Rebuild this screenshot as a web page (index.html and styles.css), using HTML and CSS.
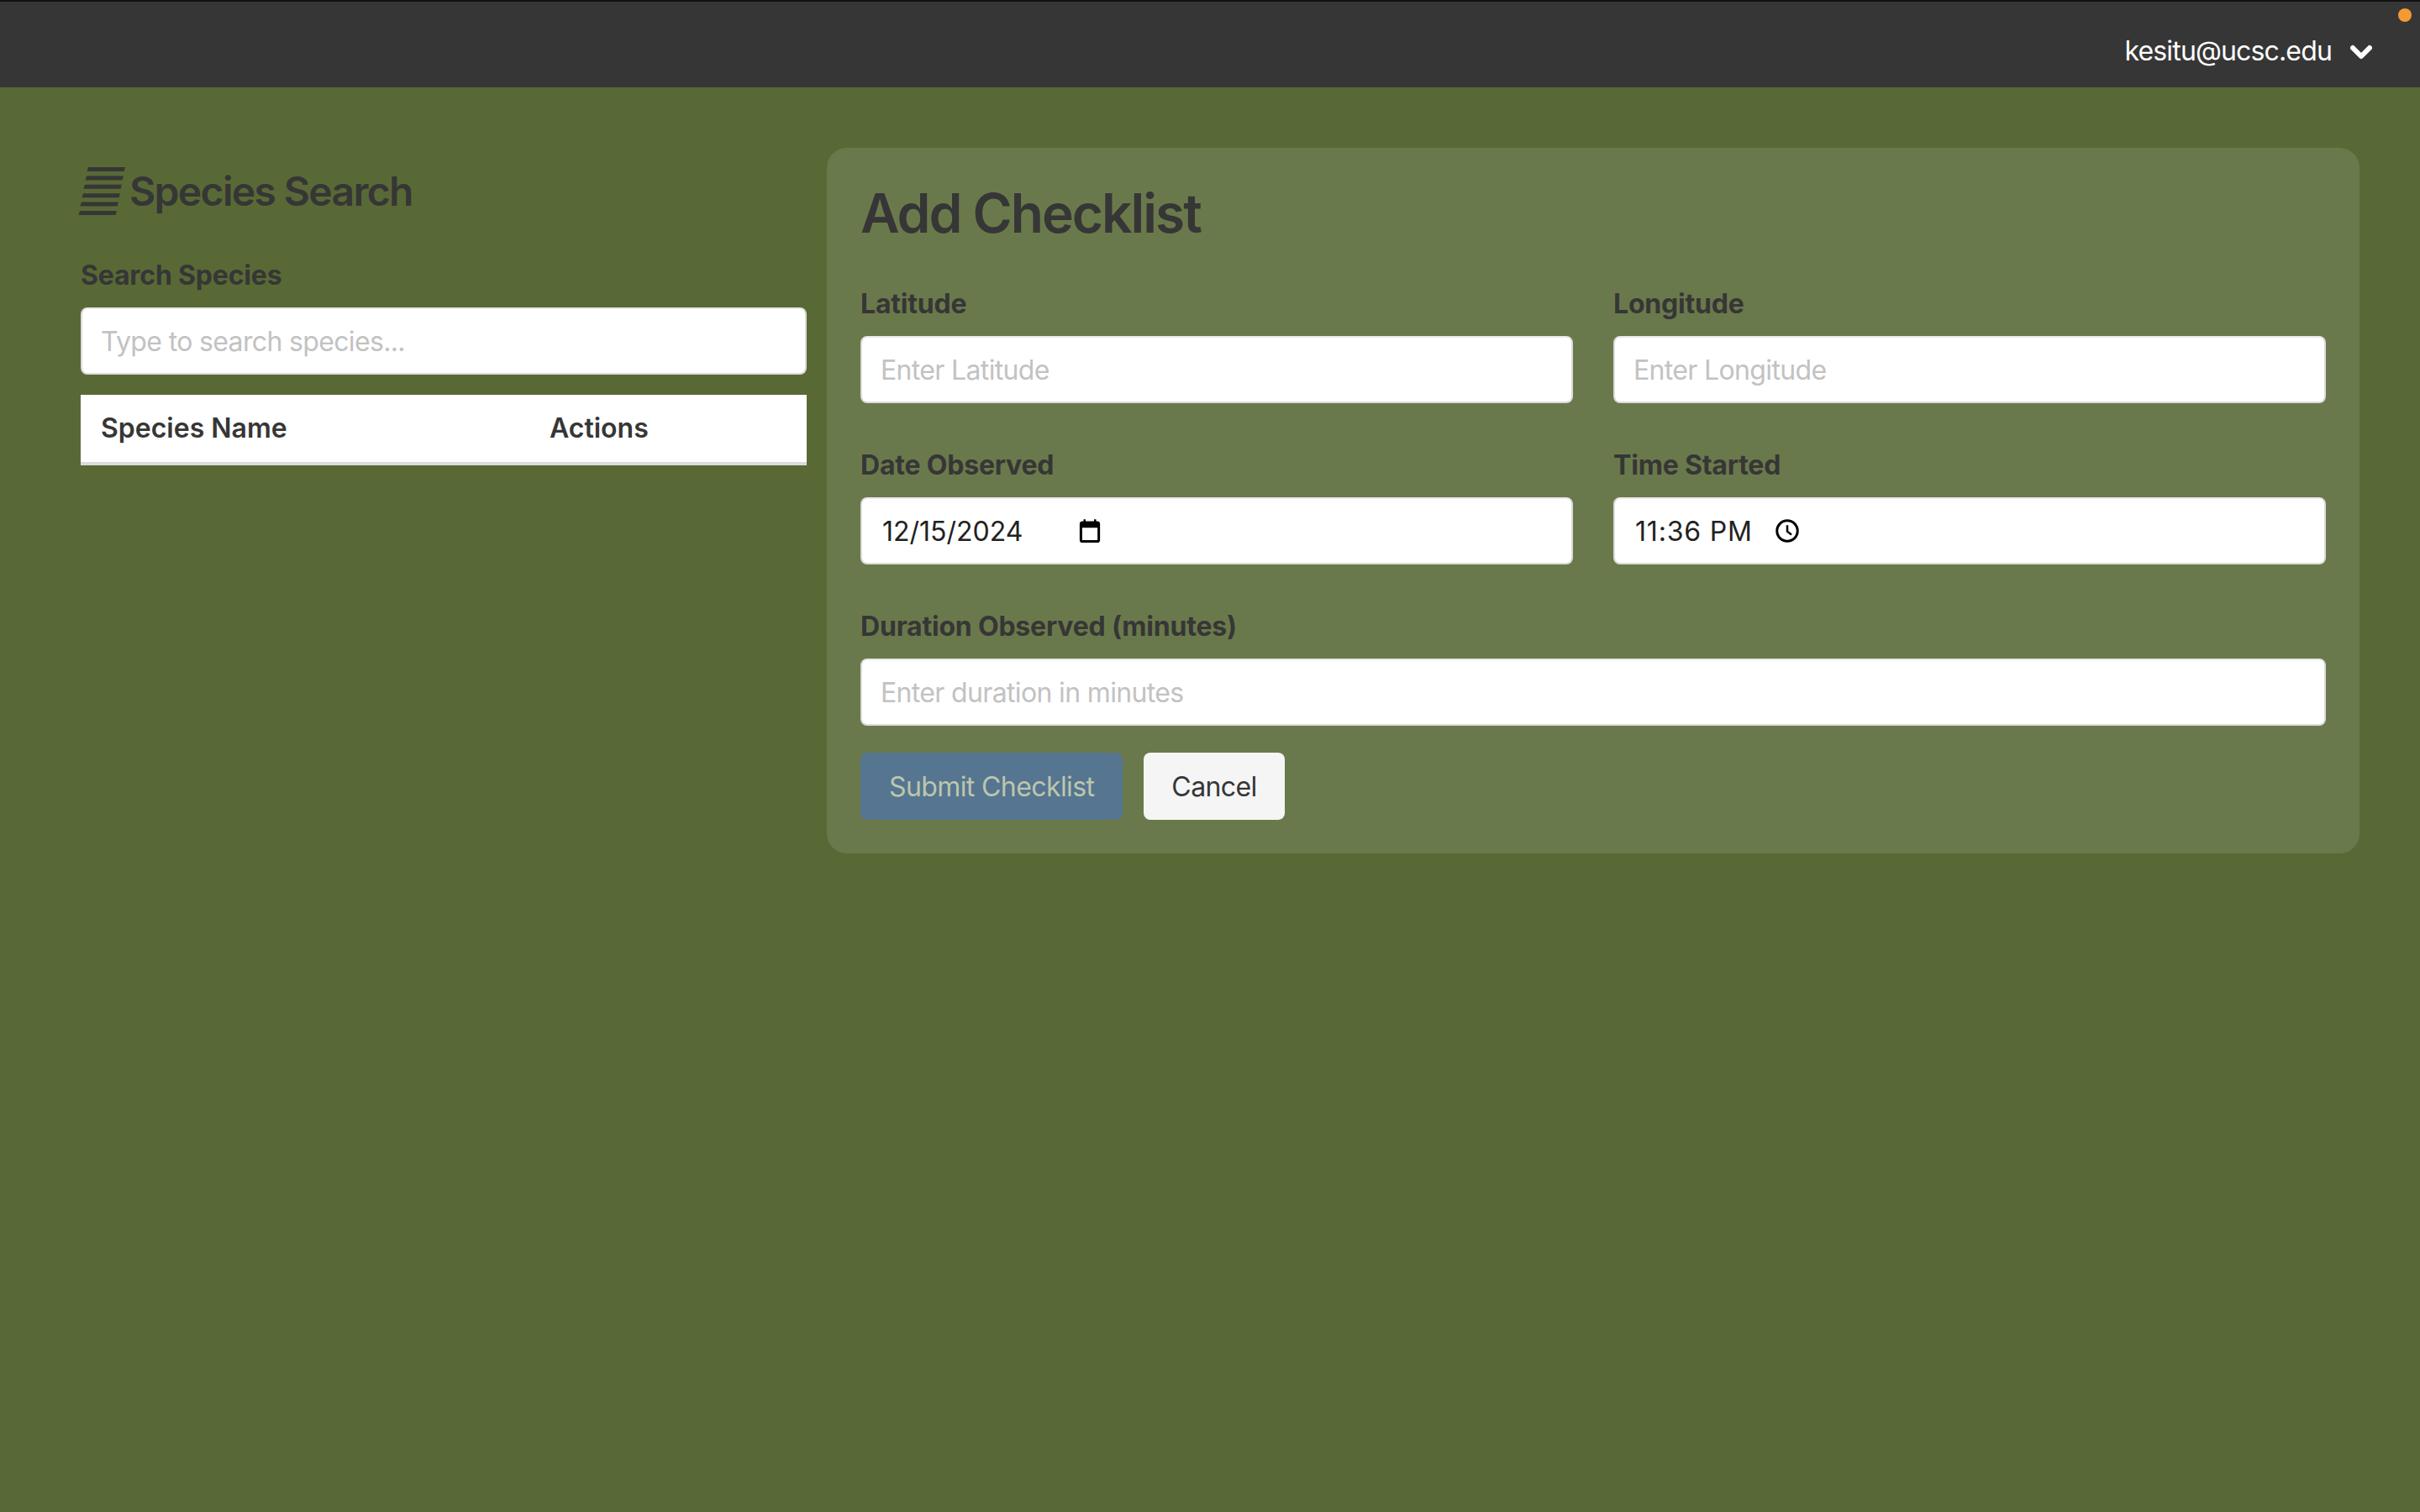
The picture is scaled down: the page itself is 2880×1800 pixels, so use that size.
FILE: index.html
```html
<!DOCTYPE html>
<html lang="en">
<head>
<meta charset="utf-8">
<title>Add Checklist</title>
<link rel="stylesheet" href="styles.css">
</head>
<body>
<nav class="navbar">
  <div class="user">
    <span>kesitu@ucsc.edu</span>
    <svg class="chevron" viewBox="0 0 26 18" aria-hidden="true"><path d="M3 4 L13 14 L23 4" fill="none" stroke="#fff" stroke-width="6" stroke-linecap="round" stroke-linejoin="round"/></svg>
  </div>
  <span class="dot"></span>
</nav>
<main class="layout">
  <section class="search">
    <h2 class="search-title">
      <svg class="bars" viewBox="0 0 56 58" aria-hidden="true">
        <path class="bar" d="M12 0H56L54.500 5H10.500Z"/>
        <path class="bar" d="M10 10.400H54L52.500 15.400H8.500Z"/>
        <path class="bar" d="M8 20.800H52L50.500 25.800H6.500Z"/>
        <path class="bar" d="M6 31.200H50L48.500 36.200H4.500Z"/>
        <path class="bar" d="M4 41.600H48L46.500 46.600H2.500Z"/>
        <path class="bar" d="M2 52H46L44.500 57H0.500Z"/>
      </svg>
      <span>Species Search</span>
    </h2>
    <label class="label">Search Species</label>
    <input class="input" type="text" placeholder="Type to search species...">
    <table class="species">
      <thead><tr><th class="col-name">Species Name</th><th>Actions</th></tr></thead>
    </table>
  </section>
  <section class="panel">
    <h1 class="panel-title">Add Checklist</h1>
    <div class="row">
      <div class="field"><label class="label">Latitude</label><input class="input" type="text" placeholder="Enter Latitude"></div>
      <div class="field"><label class="label">Longitude</label><input class="input" type="text" placeholder="Enter Longitude"></div>
    </div>
    <div class="row">
      <div class="field">
        <label class="label">Date Observed</label>
        <div class="input picker">
          <span class="date-value">12/15/2024</span>
          <svg class="ico" viewBox="0 0 24 24" aria-hidden="true"><path d="M7 1v3M17 1v3" stroke="#000" stroke-width="2" fill="none"/><rect x="3.500" y="4" width="17" height="18" rx="1.500" fill="none" stroke="#000" stroke-width="2.400"/><rect x="3" y="4" width="18" height="5" fill="#000"/></svg>
        </div>
      </div>
      <div class="field">
        <label class="label">Time Started</label>
        <div class="input picker">
          <span class="time-value">11:36 PM</span>
          <svg class="ico ico-clock" viewBox="0 0 24 24" aria-hidden="true"><circle cx="12" cy="12" r="9.800" fill="none" stroke="#000" stroke-width="2.400"/><path d="M12 6.500V12.500L16 15.500" fill="none" stroke="#000" stroke-width="2"/></svg>
        </div>
      </div>
    </div>
    <div class="field field-last">
      <label class="label">Duration Observed (minutes)</label>
      <input class="input" type="text" placeholder="Enter duration in minutes">
    </div>
    <div class="buttons">
      <button class="btn btn-submit" type="button">Submit Checklist</button>
      <button class="btn btn-cancel" type="button">Cancel</button>
    </div>
  </section>
</main>
</body>
</html>
```
FILE: styles.css
```css
* { box-sizing: border-box; }
html, body { margin: 0; height: 100%; }
body {
  background: #596936;
  color: #363636;
  font-family: Inter, "Liberation Sans", sans-serif;
  font-size: 32px;
  line-height: 48px;
}
.navbar {
  height: 104px;
  background: #363636;
  border-top: 2px solid #111;
  display: flex;
  justify-content: flex-end;
  position: relative;
}
.user {
  display: flex;
  align-items: center;
  gap: 22px;
  padding: 16px 57px 0 0;
  color: #fff;
  letter-spacing: -0.85px;
}
.chevron { width: 26px; height: 18px; margin-top: 2px; }
.dot {
  position: absolute;
  top: 8px;
  right: 10px;
  width: 16px;
  height: 16px;
  border-radius: 50%;
  background: #f59a33;
}
.layout {
  display: grid;
  grid-template-columns: 864px 1824px;
  gap: 24px;
  padding: 72px 72px 0 96px;
  align-items: start;
}
.search-title {
  display: flex;
  align-items: center;
  gap: 5px;
  height: 72px;
  margin: 16px 0 38px -3px;
  font-size: 48px;
  line-height: 72px;
  font-weight: 600;
  letter-spacing: -1.65px;
}
.bars { width: 56px; height: 58px; flex: none; }
.bar { fill: #363636; }
.label {
  display: block;
  height: 48px;
  margin-bottom: 16px;
  padding-top: 4px;
  line-height: 44px;
  font-weight: 700;
  letter-spacing: -0.2px;
}
.input {
  display: block;
  width: 100%;
  height: 80px;
  padding: 0 22px;
  background: #fff;
  border: 2px solid #dbdbdb;
  border-top-color: #e8e8e8;
  border-radius: 8px;
  font: inherit;
  color: #363636;
  outline: none;
  letter-spacing: -0.65px;
}
.input::placeholder { color: #c2c2c2; opacity: 1; }
.species {
  width: 100%;
  margin-top: 24px;
  background: #fff;
  border-collapse: separate;
  border-spacing: 0;
  table-layout: fixed;
}
.species th {
  height: 84px;
  padding: 0 24px;
  text-align: left;
  font-weight: 600;
  border-bottom: 4px solid #dbdbdb;
}
.col-name { width: 534px; }
.panel {
  padding: 40px;
  background: #6a794b;
  border-radius: 24px;
}
.panel-title {
  height: 72px;
  margin: 0 0 48px;
  padding-top: 2px;
  font-size: 64px;
  line-height: 72px;
  font-weight: 600;
  letter-spacing: -2px;
}
.row {
  display: grid;
  grid-template-columns: 1fr 1fr;
  gap: 48px;
}
.field { margin-bottom: 48px; }
.field-last { margin-bottom: 32px; }
.picker {
  display: flex;
  align-items: center;
  padding-left: 24px;
  color: #222;
  letter-spacing: 0;
}
.ico { width: 30px; height: 30px; flex: none; }
.date-value { width: 232px; padding-top: 2px; }
.time-value { width: 166px; padding-top: 2px; letter-spacing: 0.8px; }
.buttons { display: flex; gap: 25px; }
.btn {
  height: 80px;
  padding: 2px 34px 0;
  border: 0;
  border-radius: 8px;
  font: inherit;
  letter-spacing: -0.6px;
}
.btn-submit { background: #567590; color: #bcc6ad; }
.btn-cancel { padding-inline: 33px; background: #f5f5f5; color: #363636; }
```
